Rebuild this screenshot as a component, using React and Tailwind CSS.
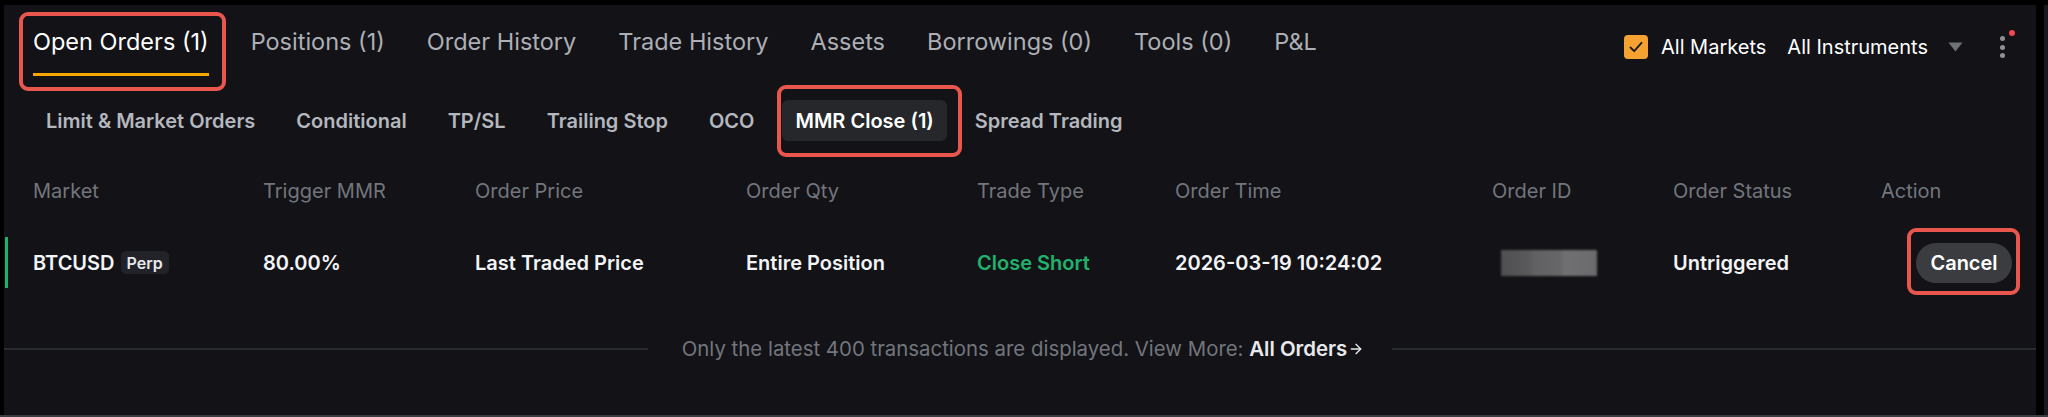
import React from 'react';
import { ArrowRight } from 'lucide-react';

const topTabs = ['Open Orders (1)', 'Positions (1)', 'Order History', 'Trade History', 'Assets', 'Borrowings (0)', 'Tools (0)', 'P&L'];
const subTabs = ['Limit & Market Orders', 'Conditional', 'TP/SL', 'Trailing Stop', 'OCO', 'MMR Close (1)', 'Spread Trading'];

// column widths measured from the left edge of the "Market" column
const columns = [
  { label: 'Market', w: 'w-[230px]' },
  { label: 'Trigger MMR', w: 'w-[212px]' },
  { label: 'Order Price', w: 'w-[271px]' },
  { label: 'Order Qty', w: 'w-[231px]' },
  { label: 'Trade Type', w: 'w-[198px]' },
  { label: 'Order Time', w: 'w-[317px]' },
  { label: 'Order ID', w: 'w-[181px]' },
  { label: 'Order Status', w: 'w-[208px]' },
  { label: 'Action', w: 'w-[140px]' },
];

function Highlight({ className }) {
  return <div className={"absolute border-[4px] border-[#e9564e] rounded-[9px] pointer-events-none " + className} />;
}

export default function App() {
  return (
    <div className="relative w-[2048px] h-[417px] bg-black overflow-hidden font-['Inter','Liberation_Sans',sans-serif]">
      <div className="flex mt-[5px] h-[410px]">
        <div className="w-[4px]" />
        <div className="w-[2032px] h-full bg-[#121217] flex flex-col">
          {/* main tabs */}
          <div className="h-[72px] flex justify-between items-start">
            <div className="flex gap-[42px] pl-[29px] pt-[22px]">
              {topTabs.map((t, i) => (
                <div key={t} className="flex flex-col">
                  <span className={"text-[23.5px] leading-[30px] whitespace-nowrap " + (i === 0 ? 'text-white' : 'text-[#acafb5]')}>{t}</span>
                  {i === 0 && <div className="mt-[16px] h-[3px] bg-[#f7a600]" />}
                </div>
              ))}
            </div>
            <div className="flex items-center h-[30px] mt-[27px] pr-[31px]">
              <div className="w-[24px] h-[24px] rounded-[4px] bg-[#f6a233] flex items-center justify-center">
                <svg width="16" height="16" viewBox="0 0 16 16" fill="none">
                  <path d="M2.5 8.5 6.2 12.2 13.5 3.8" stroke="#1a1a1a" strokeWidth="1.8" strokeLinecap="round" strokeLinejoin="round" />
                </svg>
              </div>
              <span className="ml-[13px] text-[20px] text-white whitespace-nowrap">All Markets</span>
              <span className="ml-[21px] text-[20px] text-white whitespace-nowrap">All Instruments</span>
              <svg className="ml-[20px]" width="15" height="10" viewBox="0 0 15 10">
                <path d="M0.5 0.5h14L7.5 9.5z" fill="#6f7277" />
              </svg>
              <div className="relative ml-[37px] flex flex-col gap-[3.5px]">
                <div className="w-[5px] h-[5px] rounded-full bg-[#8e9197]" />
                <div className="w-[5px] h-[5px] rounded-full bg-[#8e9197]" />
                <div className="w-[5px] h-[5px] rounded-full bg-[#8e9197]" />
                <div className="absolute left-[9px] top-[-6px] w-[6px] h-[6px] rounded-full bg-[#f0484f]" />
              </div>
            </div>
          </div>

          {/* sub tabs */}
          <div className="mt-[23px] flex gap-[15px] pl-[29px]">
            {subTabs.map((t) => (
              <div
                key={t}
                className={"h-[41px] px-[13px] flex items-center rounded-[6px] text-[20px] font-semibold whitespace-nowrap " + (t === 'MMR Close (1)' ? 'bg-[#25272b] text-white' : 'text-[#b4b7bd]')}
              >
                {t}
              </div>
            ))}
          </div>

          {/* table header */}
          <div className="mt-[36px] flex h-[28px] items-center">
            <div className="w-[29px]" />
            {columns.map((c) => (
              <div key={c.label} className={c.w + " text-[20px] leading-[28px] text-[#72767c] whitespace-nowrap"}>{c.label}</div>
            ))}
          </div>

          {/* row */}
          <div className="mt-[32px] flex h-[51px] items-center text-[20px] font-semibold text-[#f3f4f6]">
            <div className="w-[29px] h-full">
              <div className="ml-[1px] w-[3px] h-full bg-[#20b26c]" />
            </div>
            <div className="w-[230px] flex items-center gap-[6px]">
              <span>BTCUSD</span>
              <span className="h-[23px] px-[6px] flex items-center rounded-[5px] bg-[#212328] text-[16px] text-[#e8e9eb]">Perp</span>
            </div>
            <div className="w-[212px]">80.00%</div>
            <div className="w-[271px]">Last Traded Price</div>
            <div className="w-[231px]">Entire Position</div>
            <div className="w-[198px] text-[#20b26c]">Close Short</div>
            <div className="w-[317px]">2026-03-19 10:24:02</div>
            <div className="w-[181px] pl-[9px]">
              <div className="w-[96px] h-[26px] blur-[0.8px] bg-[linear-gradient(90deg,#4f4f51_0%,#5a5a5c_30%,#616163_34%,#676769_62%,#707072_66%,#6b6b6d_100%)]" />
            </div>
            <div className="w-[208px]">Untriggered</div>
            <div className="w-[140px] pl-[35px]">
              <button className="h-[40px] w-[96px] rounded-full bg-[#3b3c40] text-white text-[20px] font-semibold">Cancel</button>
            </div>
          </div>

          {/* footer */}
          <div className="mt-[47px] flex h-[28px] items-center">
            <div className="flex-1 h-[2px] bg-[#282b2f]" />
            <div className="ml-[34px] mr-[28px] flex items-center text-[20.4px] text-[#72767c] whitespace-nowrap">
              <span>Only the latest 400 transactions are displayed. View More:&nbsp;</span>
              <span className="font-semibold text-[#e8e9eb]">All Orders</span>
              <ArrowRight size={16} strokeWidth={2} className="text-[#e8e9eb] ml-[1px]" />
            </div>
            <div className="flex-1 h-[2px] bg-[#282b2f]" />
          </div>
        </div>
        <div className="w-[8px]" />
        <div className="w-[4px] bg-[#19191d]" />
      </div>
      <div className="h-[2px] bg-[#3b3c3f]" />

      {/* annotation boxes */}
      <Highlight className="left-[19px] top-[12px] w-[207px] h-[79px]" />
      <Highlight className="left-[777px] top-[85px] w-[185px] h-[72px]" />
      <Highlight className="left-[1907px] top-[228px] w-[113px] h-[67px]" />
    </div>
  );
}
